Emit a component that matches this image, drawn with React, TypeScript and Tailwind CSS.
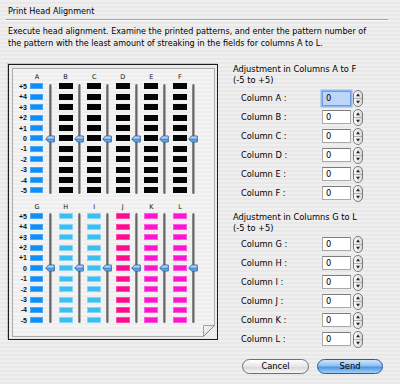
import React from "react";

const rows = ["+5", "+4", "+3", "+2", "+1", "0", "-1", "-2", "-3", "-4", "-5"];

type Col = { letter: string; bar: string };

const group1: Col[] = [
  { letter: "A", bar: "w-[13px] h-[6px] bg-[#0f8ff5] border border-[#4aa9f7]" },
  { letter: "B", bar: "w-[14px] h-[6px] bg-[#050505]" },
  { letter: "C", bar: "w-[14px] h-[6px] bg-[#050505]" },
  { letter: "D", bar: "w-[14px] h-[6px] bg-[#050505]" },
  { letter: "E", bar: "w-[14px] h-[6px] bg-[#050505]" },
  { letter: "F", bar: "w-[14px] h-[6px] bg-[#050505]" },
];

const group2: Col[] = [
  { letter: "G", bar: "w-[13px] h-[6px] bg-[#0f8ff5] border border-[#4aa9f7]" },
  { letter: "H", bar: "w-[14px] h-[6px] bg-[#3cbef0] border border-[#86d6f6]" },
  { letter: "I", bar: "w-[14px] h-[6px] bg-[#3cbef0] border border-[#86d6f6]" },
  { letter: "J", bar: "w-[14px] h-[6px] bg-[#ff0a8e] border border-[#ff4aa8]" },
  { letter: "K", bar: "w-[14px] h-[6px] bg-[#ff12d0] border border-[#ff5ade]" },
  { letter: "L", bar: "w-[14px] h-[6px] bg-[#ff12d0] border border-[#ff5ade]" },
];

function Knob() {
  return (
    <svg width="10" height="8" viewBox="0 0 10 8" className="absolute left-[15px] top-[65px]">
      <defs>
        <linearGradient id="kg" x1="0" y1="0" x2="0" y2="1">
          <stop offset="0" stopColor="#e6f2ff" />
          <stop offset="0.45" stopColor="#7fb8ef" />
          <stop offset="0.55" stopColor="#3f8ad8" />
          <stop offset="1" stopColor="#8cc6f6" />
        </linearGradient>
      </defs>
      <polygon points="0.7,4 3.5,1 9.3,1 9.3,7 3.5,7" fill="url(#kg)" stroke="#2f5f9c" strokeWidth="0.9" strokeLinejoin="round" />
    </svg>
  );
}

function Group({ cols }: { cols: Col[] }) {
  return (
    <div className="flex">
      <div className="w-[17px] flex flex-col">
        <div className="h-[11.8px]" />
        {rows.map((r) => (
          <div key={r} className="h-[10.4px] flex items-center justify-end pr-[3px] font-['Liberation_Sans',sans-serif] font-bold text-[7px] leading-none text-[#111]">
            {r}
          </div>
        ))}
      </div>
      {cols.map((c) => (
        <div key={c.letter} className="w-[28.6px] relative flex flex-col">
          <div className="h-[11.8px] pt-[4px] w-[14px] flex items-center justify-center text-[6.5px] leading-none text-[#111]">
            {c.letter}
          </div>
          {rows.map((r) => (
            <div key={r} className="h-[10.4px] flex items-center">
              <div className={c.bar} />
            </div>
          ))}
          <div className="absolute left-[19px] top-[14px] bottom-[2px] w-[3px] rounded-full bg-[linear-gradient(to_right,#a0a0a0,#5e5e5e_45%,#707070_60%,#d4d4d4)]" />
          <Knob />
        </div>
      ))}
    </div>
  );
}

function Stepper() {
  return (
    <svg width="10" height="17" viewBox="0 0 10 17" className="ml-[2px]">
      <defs>
        <linearGradient id="sg" x1="0" y1="0" x2="1" y2="0">
          <stop offset="0" stopColor="#ffffff" />
          <stop offset="1" stopColor="#d6d6d6" />
        </linearGradient>
      </defs>
      <rect x="0.5" y="0.5" width="9" height="16" rx="4.5" fill="url(#sg)" stroke="#7a7a7a" />
      <line x1="1" y1="8.5" x2="9" y2="8.5" stroke="#a0a0a0" strokeWidth="0.8" />
      <polygon points="5,3.5 7,6.3 3,6.3" fill="#222" />
      <polygon points="5,13.5 7,10.7 3,10.7" fill="#222" />
    </svg>
  );
}

function FieldRow({ label, focused }: { label: string; focused?: boolean }) {
  return (
    <div className="h-[19px] flex items-center pl-[8px]">
      <div className="w-[81px] text-[8.3px] leading-none text-black">{label}</div>
      <div
        className={
          focused
            ? "w-[29px] h-[15px] flex items-center pl-[3px] bg-[#bcd6fb] border border-[#6d9be0] shadow-[0_0_0_1.5px_#8fb8f0] text-[8.3px] leading-none"
            : "w-[29px] h-[14px] flex items-center pl-[3px] bg-white border border-[#a9a9a9] border-t-[#7d7d7d] text-[8.3px] leading-none"
        }
      >
        0
      </div>
      <Stepper />
    </div>
  );
}

export default function App() {
  return (
    <div className="w-[400px] h-[384px] overflow-hidden flex flex-col font-['DejaVu_Sans',sans-serif] text-black bg-[repeating-linear-gradient(to_bottom,#efefef_0px,#efefef_2px,#e8e8e8_2px,#e8e8e8_4px)]">
      <div className="pl-[8px] pt-[6px] h-[16px] text-[8.1px] leading-[10px] text-black">Print Head Alignment</div>
      <div className="mt-[3px] mx-[6px] w-[382px] h-[2px] border-t border-t-[#a4a4a4] border-b border-b-[#fafafa]" />
      <div className="pl-[8px] mt-[5px] text-[8.05px] leading-[11.5px] text-black">
        <div>Execute head alignment. Examine the printed patterns, and enter the pattern number of</div>
        <div>the pattern with the least amount of streaking in the fields for columns A to L.</div>
      </div>
      <div className="flex items-start mt-[14.5px]">
        <div className="ml-[8px] w-[210px] h-[276px] border border-[#1c1c1c] shadow-[-1px_-1px_0_#c6c6c6] pt-[3px] pl-[3px] pr-[2px] pb-[2px]">
          <div className="relative w-full h-full border border-[#ababab] bg-[repeating-linear-gradient(to_bottom,#f4f4f4_0px,#f4f4f4_2px,#eeeeee_2px,#eeeeee_4px)] pt-[1px]">
            <Group cols={group1} />
            <div className="mt-[3.8px]">
              <Group cols={group2} />
            </div>
            <svg width="12" height="12" viewBox="0 0 12 12" className="absolute right-[-1px] bottom-[-1px]">
              <defs>
                <linearGradient id="fg" x1="0" y1="0" x2="1" y2="1">
                  <stop offset="0" stopColor="#f6f6f6" />
                  <stop offset="1" stopColor="#d2d2d2" />
                </linearGradient>
              </defs>
              <rect x="0" y="0" width="12" height="12" fill="#ededed" />
              <polygon points="0.5,0.5 11.5,0.5 0.5,11.5" fill="url(#fg)" stroke="#a0a0a0" strokeWidth="1" />
              <line x1="0.5" y1="11.5" x2="11.5" y2="0.5" stroke="#8a8a8a" strokeWidth="1" />
            </svg>
          </div>
        </div>
        <div className="ml-[15px] flex flex-col">
          <div className="text-[8.3px] leading-[11px] text-black pt-[0.5px]">
            <div>Adjustment in Columns A to F</div>
            <div>(-5 to +5)</div>
          </div>
          <div className="mt-[2.5px]">
            <FieldRow label="Column A :" focused />
            <FieldRow label="Column B :" />
            <FieldRow label="Column C :" />
            <FieldRow label="Column D :" />
            <FieldRow label="Column E :" />
            <FieldRow label="Column F :" />
          </div>
          <div className="mt-[9px] text-[8.3px] leading-[11px] text-black">
            <div>Adjustment in Columns G to L</div>
            <div>(-5 to +5)</div>
          </div>
          <div className="mt-[1px]">
            <FieldRow label="Column G :" />
            <FieldRow label="Column H :" />
            <FieldRow label="Column I :" />
            <FieldRow label="Column J :" />
            <FieldRow label="Column K :" />
            <FieldRow label="Column L :" />
          </div>
          <div className="flex mt-[10px] ml-[9px] gap-[8px]">
            <button className="w-[67px] h-[15px] rounded-full border border-[#6f6f6f] bg-[linear-gradient(to_bottom,#ffffff,#e6e6e6_50%,#d8d8d8_55%,#f6f6f6)] text-[8.3px] leading-none text-black flex items-center justify-center">
              Cancel
            </button>
            <button className="w-[66px] h-[15px] rounded-full border border-[#2c5c9f] bg-[linear-gradient(to_bottom,#cfe6fd,#8ec0f2_45%,#4f95e0_55%,#9ed2fb)] text-[8.3px] leading-none text-black flex items-center justify-center">
              Send
            </button>
          </div>
        </div>
      </div>
    </div>
  );
}
